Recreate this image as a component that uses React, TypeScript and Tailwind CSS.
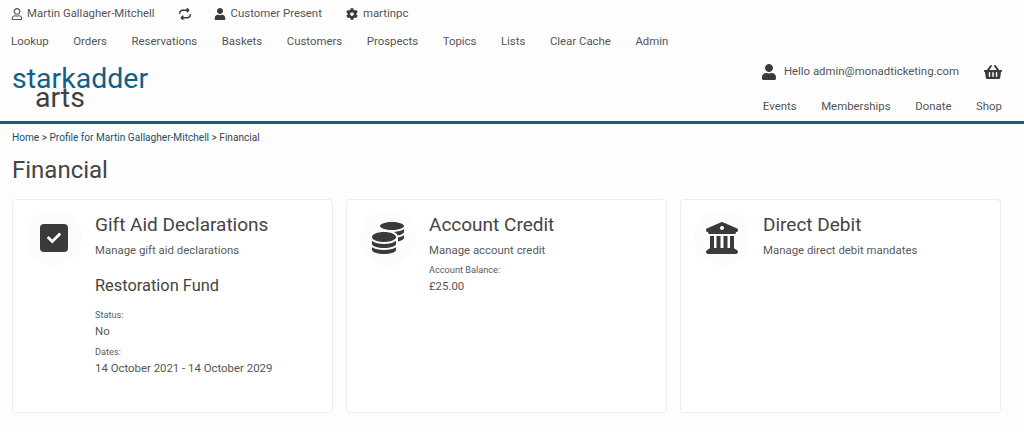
import { FaCheck, FaCoins, FaUser, FaRegUser, FaCog, FaShoppingBasket } from "react-icons/fa";
import { FaRepeat, FaBuildingColumns } from "react-icons/fa6";
import type { ReactNode } from "react";

const mainNav = ["Lookup", "Orders", "Reservations", "Baskets", "Customers", "Prospects", "Topics", "Lists", "Clear Cache", "Admin"];
const siteNav = ["Events", "Memberships", "Donate", "Shop"];

function Card({ icon, title, subtitle, children }: { icon: ReactNode; title: string; subtitle: string; children?: ReactNode }) {
  return (
    <div className="h-[214px] bg-white border border-[#ececec] rounded-[4px] flex">
      {/* Icon */}
      <div className="w-[81px] shrink-0 flex justify-center pt-[10px] text-[#3a3a3a]">
        <div className="w-[56px] h-[56px] rounded-full bg-[#fcfcfc] flex items-center justify-center text-[32px]">{icon}</div>
      </div>
      <div className="pt-[12px] pl-[1px]">
        <h2 className="text-[19px] leading-[26px] text-[#444]">{title}</h2>
        <p className="mt-[3px] text-[11.4px] leading-[18px] text-[#5a5a5a]">{subtitle}</p>
        {children}
      </div>
    </div>
  );
}

function Field({ label, value }: { label: string; value: string }) {
  return (
    <div>
      <div className="text-[9.2px] leading-[14px] text-[#5a5a5a]">{label}</div>
      <div className="text-[11.4px] leading-[18px] text-[#555]">{value}</div>
    </div>
  );
}

export default function App() {
  return (
    <div className="h-[432px] overflow-hidden bg-[#fdfdfd] font-['Roboto',sans-serif]">
      {/* Staff bar */}
      <div className="h-[28px] pl-[11px] flex items-center text-[11.4px] text-[#555]">
        <FaRegUser className="text-[12px] mr-[4px]" />
        <span>Martin Gallagher-Mitchell</span>
        <FaRepeat className="text-[12px] ml-[24px] text-[#3a3a3a]" />
        <FaUser className="text-[12px] ml-[23px] mr-[5px] text-[#3a3a3a]" />
        <span>Customer Present</span>
        <FaCog className="text-[12px] ml-[24px] mr-[5px] text-[#3a3a3a]" />
        <span>martinpc</span>
      </div>
      <nav className="h-[28px] pl-[11px] flex items-center gap-[24.55px] text-[11.4px] text-[#555]">
        {mainNav.map((item) => (
          <span key={item}>{item}</span>
        ))}
      </nav>

      {/* Site header */}
      <header className="h-[65px] border-b-[3px] border-[#1a5e7e] box-content flex justify-between">
        <div className="pl-[12px] pt-[8px] leading-none">
          <div className="text-[28.5px] leading-[30px] text-[#0f5f8a]">starkadder</div>
          <div className="-mt-[10px] pl-[23px] text-[28.5px] leading-[28px] text-[#404040]">arts</div>
        </div>
        <div className="pr-[22px] flex flex-col items-end">
          <div className="h-[30px] mt-[1px] flex items-center text-[11.4px] text-[#555]">
            <FaUser className="text-[16px] mr-[7px] text-[#3a3a3a]" />
            <span>Hello admin@monadticketing.com</span>
            <FaShoppingBasket className="text-[18px] ml-[25px] text-[#3a3a3a]" />
          </div>
          <nav className="mt-[10px] flex gap-[24.6px] text-[11.4px] leading-[18px] text-[#555]">
            {siteNav.map((item) => (
              <span key={item}>{item}</span>
            ))}
          </nav>
        </div>
      </header>

      {/* Breadcrumb */}
      <div className="pl-[12px] pt-[6px] text-[10.1px] leading-[16px] text-[#404040]">
        <span className="text-[#17506e]">Home</span> &gt; <span className="text-[#17506e]">Profile for Martin Gallagher-Mitchell</span> &gt; Financial
      </div>
      <h1 className="pl-[12px] mt-[8px] text-[24px] leading-[32px] text-[#444]">Financial</h1>

      <div className="mt-[13px] pl-[12px] pr-[23px] grid grid-cols-3 gap-[13px]">
        <Card
          icon={
            <span className="w-[28px] h-[28px] rounded-[4px] bg-[#3a3a3a] flex items-center justify-center">
              <FaCheck className="text-[14px] text-white" />
            </span>
          }
          title="Gift Aid Declarations"
          subtitle="Manage gift aid declarations"
        >
          <h3 className="mt-[16px] text-[16.4px] leading-[22px] text-[#444]">Restoration Fund</h3>
          <div className="mt-[11px] flex flex-col gap-[5px]">
            <Field label="Status:" value="No" />
            <Field label="Dates:" value="14 October 2021 - 14 October 2029" />
          </div>
        </Card>
        <Card icon={<FaCoins />} title="Account Credit" subtitle="Manage account credit">
          <div className="mt-[4px]">
            <Field label="Account Balance:" value="£25.00" />
          </div>
        </Card>
        <Card icon={<FaBuildingColumns />} title="Direct Debit" subtitle="Manage direct debit mandates" />
      </div>
    </div>
  );
}
